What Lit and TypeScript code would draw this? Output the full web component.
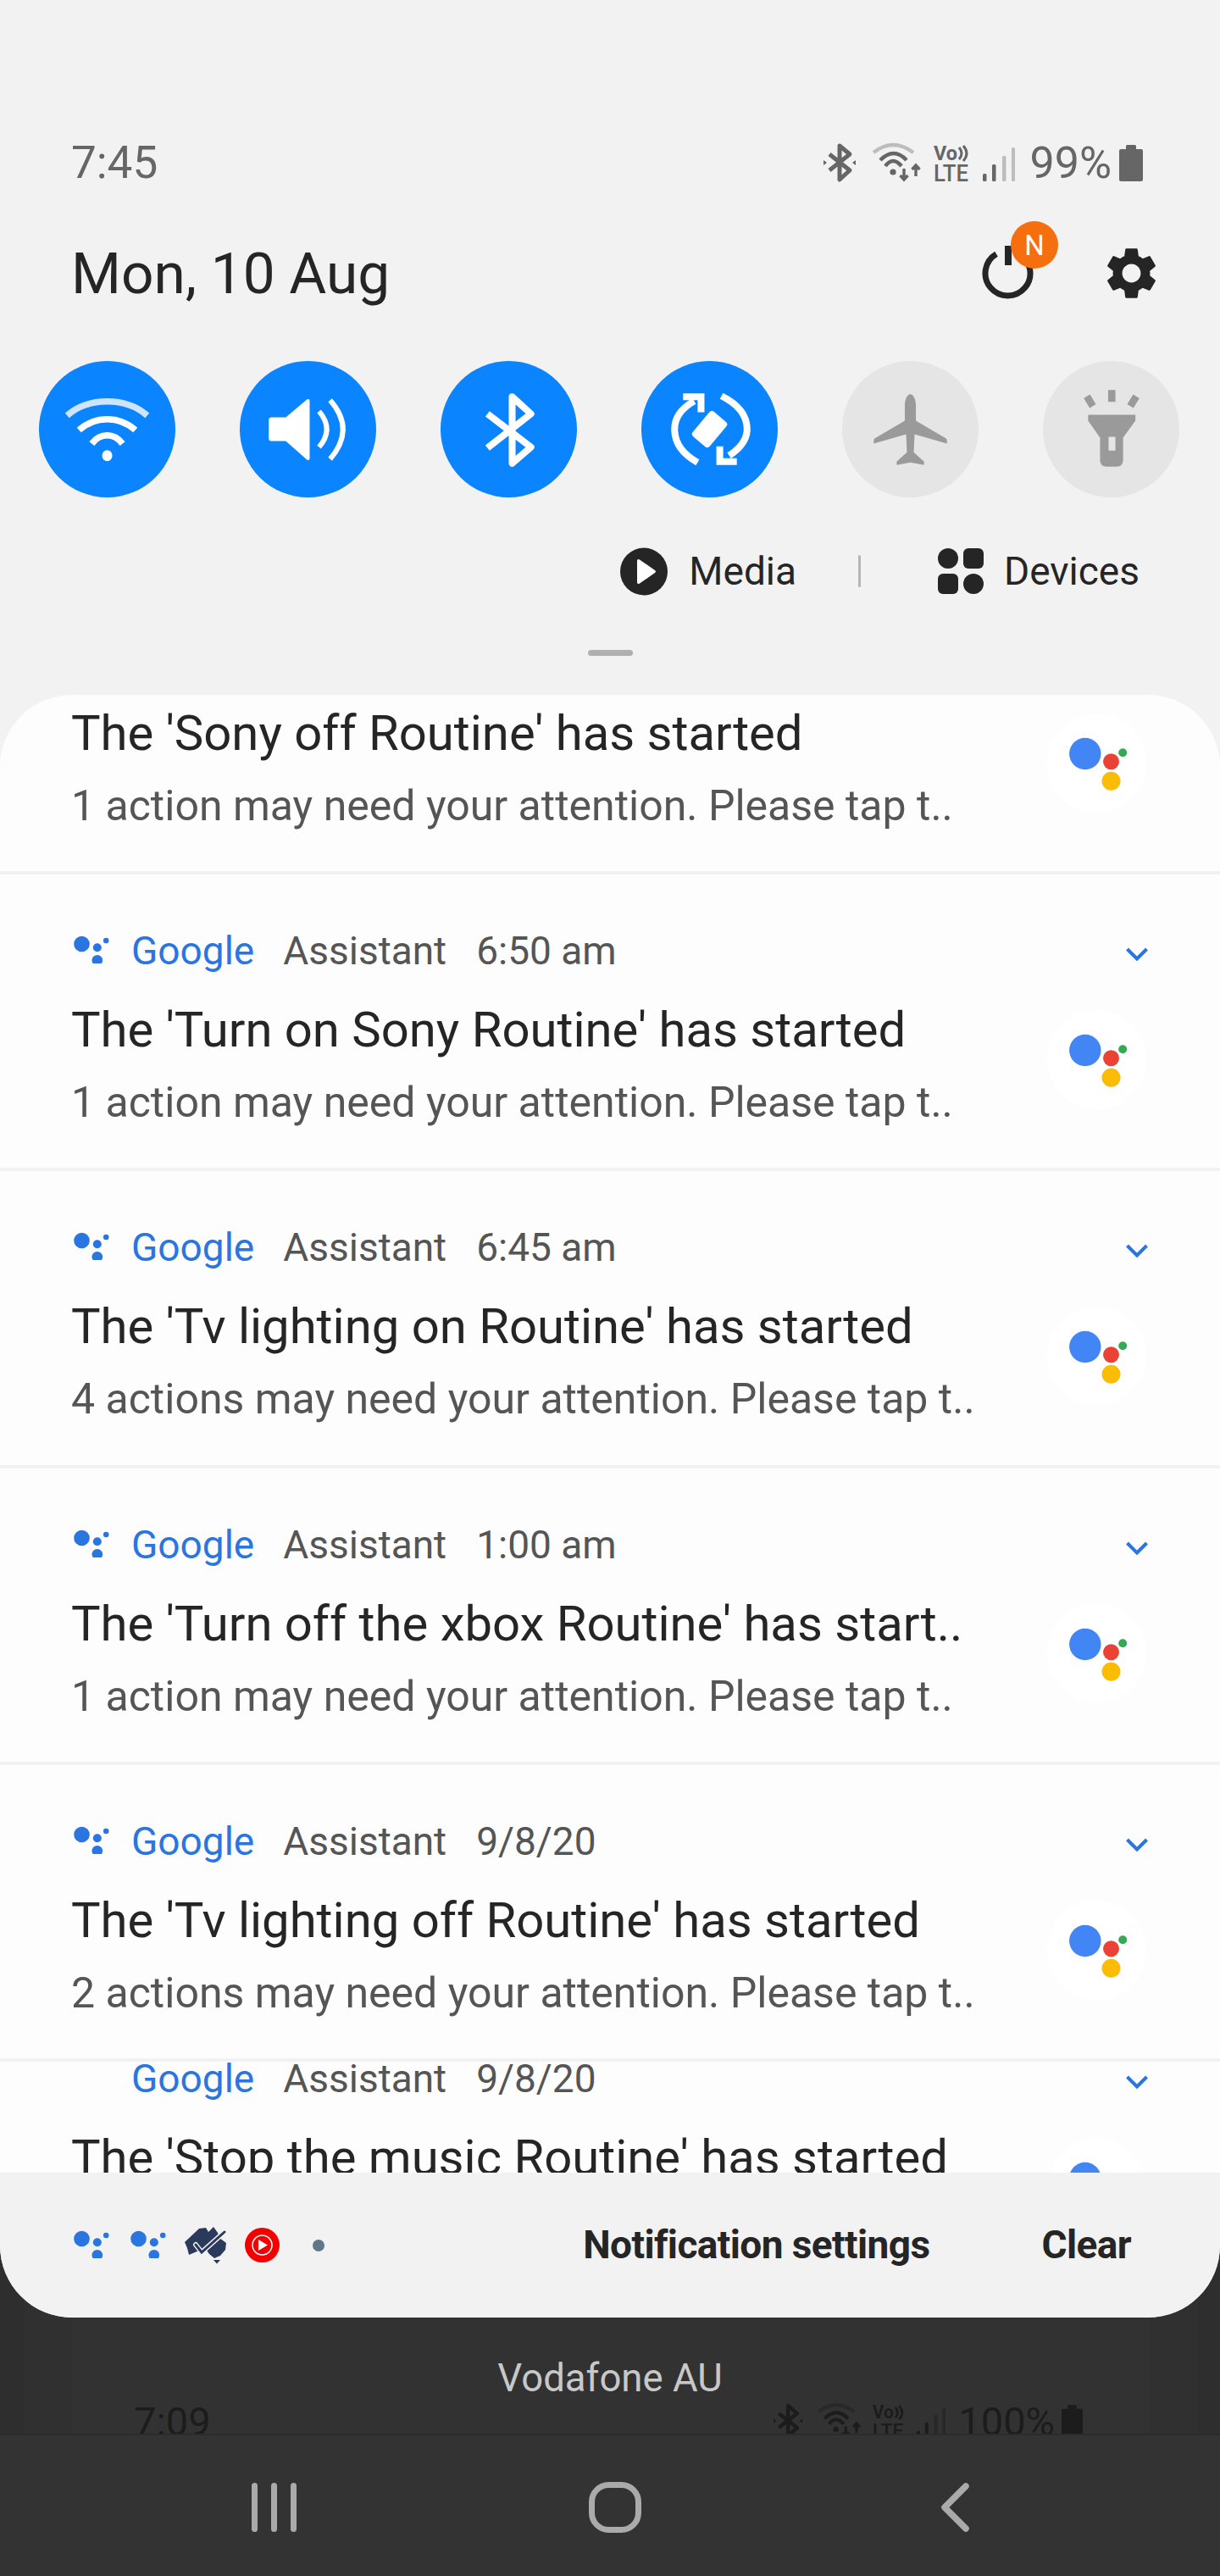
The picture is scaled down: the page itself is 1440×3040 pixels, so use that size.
import { LitElement, html, css, svg, nothing } from "lit";
import { customElement } from "lit/decorators.js";

const dots = () => html`<svg class="dots" width="44" height="36" viewBox="0 0 44 36">
  <circle cx="9.5" cy="13" r="9.3"/><circle cx="27.8" cy="17.3" r="5"/><circle cx="38.2" cy="9" r="3.3"/><circle cx="27.8" cy="32.300" r="6.3"/>
</svg>`;

const statusIcons = (w: number, h: number) => html`<svg class="sicons" width=${w} height=${h} viewBox="0 0 226 44">
  <g fill="none" stroke="currentColor" stroke-width="5" stroke-linejoin="round">
    <path d="M7 12 L31 31 L19 42 V2 L31 12 L7 31"/>
  </g>
  <path d="M0 19 L4 22 L0 25Z M38 19 L34 22 L38 25Z" fill="currentColor"/>
  <g fill="none" stroke-width="4.5">
    <path class="pale" d="M59 10 Q82 -8 106 10"/>
    <path stroke="currentColor" d="M67 19 Q83 3 98 19"/>
    <path stroke="currentColor" d="M73 26 Q82 14 92 26"/>
  </g>
  <circle cx="82" cy="33" r="3.6" fill="currentColor"/>
  <path d="M95 29 V41 M90.5 37 L95 42 L99.5 37 M109 38 V26 M104.5 30 L109 25 L113.5 30" fill="none" stroke="currentColor" stroke-width="3.4"/>
  <text x="130" y="19" class="vo" textLength="28" lengthAdjust="spacingAndGlyphs">Vo</text>
  <path d="M160 4 Q166 11 160 18 M165 2 Q173 11 165 20" fill="none" stroke="currentColor" stroke-width="3"/>
  <text x="130" y="44" class="lte" textLength="41" lengthAdjust="spacingAndGlyphs">LTE</text>
  <rect x="188" y="35" width="4.5" height="9" rx="1.5" fill="currentColor"/>
  <rect x="199" y="24" width="4.5" height="20" rx="1.5" fill="currentColor"/>
  <rect class="palef" x="211" y="14" width="4.5" height="30" rx="1.5"/>
  <rect class="palef" x="222" y="4" width="4" height="40" rx="1.5"/>
</svg>`;

const battery = (w: number, h: number) => html`<svg width=${w} height=${h} viewBox="0 0 28 43">
  <path fill="currentColor" d="M8 1.5 Q8 0 9.5 0 H18.500 Q20 0 20 1.500 V5 H26 Q28 5 28 7 V41 Q28 43 26 43 H2 Q0 43 0 41 V7 Q0 5 2 5 H8Z"/>
</svg>`;

const avatar = () => html`<div class="avatar"><svg width="117" height="117" viewBox="0 0 117 117">
  <circle cx="44.800" cy="47.500" r="18.700" fill="#4285f4"/>
  <circle cx="75.500" cy="56.800" r="9.500" fill="#ea4335"/>
  <circle cx="89.200" cy="46.200" r="5" fill="#34a853"/>
  <circle cx="75.500" cy="79.800" r="11" fill="#fbbc05"/>
</svg></div>`;

const chevron = () => html`<svg class="chev" width="26" height="16" viewBox="0 0 26 16"><path d="M1.500 2 L13 13.500 L24.500 2" fill="none" stroke="#2a75e0" stroke-width="4"/></svg>`;

const toggles = [
  svg`<g fill="none" stroke="#fff" stroke-width="7.500"><path stroke="#cde4fb" d="M33 64 C58 42 102 42 127 64"/><path d="M47 81 C66 64 94 64 113 81"/><path d="M62 97 C72 84 88 84 98 97"/></g><ellipse cx="80" cy="111" rx="6" ry="6.500" fill="#fff"/>`,
  svg`<path fill="#fff" d="M37 66 H54 L79 45 Q82 44 82 47 V114 Q82 117 79 116 L54 94 H37 Q34 94 34 91 V69 Q34 66 37 66Z"/><path fill="none" stroke="#fff" stroke-width="6" d="M93 59 Q111 80 93 101 M106 46 Q136 80 106 115"/>`,
  svg`<path fill="none" stroke="#fff" stroke-width="8" stroke-linejoin="round" d="M55 62 L106 101 L84 120 V42 L106 62 L55 102"/>`,
  svg`<g fill="none" stroke="#fff" stroke-width="8"><path d="M62 47 Q39 60 39 80 Q39 104 66 119"/><path d="M94 41 Q124 56 124 80 Q124 97 103 111"/><path d="M49 42 H70 V60"/><path d="M112 118 H92 V100"/></g><rect x="67" y="61" width="26" height="38" rx="4" transform="rotate(40 80 80)" fill="#fff"/>`,
  svg`<path fill="#9a9a9a" d="M80 39 C76.500 39 73.500 45 73.500 52 V70 L38 91 Q37 92 37 94 V97 L75 86 L76 107 L64 118 V122 L80 119 L96 122 V118 L84 107 L85 86 L123 97 V94 Q123 92 122 91 L86.500 70 V52 C86.500 45 83.500 39 80 39Z"/>`,
  svg`<path fill="#9a9a9a" fill-rule="evenodd" d="M53 63 H108.500 V70 L94 90 V116 Q94 124 86 124 H75 Q67 124 67 116 V90 L53 70Z M77 89 V105 H85 V89Z"/><path d="M80.800 34 V48 M51.500 41.500 L58.500 53 M109.500 41.500 L102.500 53" stroke="#9a9a9a" stroke-width="8.500" fill="none"/>`,
];

type Note = { time: string; title: string; body: string };
const notes: Note[] = [
  { time: "", title: "The 'Sony off Routine' has started", body: "1 action may need your attention. Please tap t.." },
  { time: "6:50 am", title: "The 'Turn on Sony Routine' has started", body: "1 action may need your attention. Please tap t.." },
  { time: "6:45 am", title: "The 'Tv lighting on Routine' has started", body: "4 actions may need your attention. Please tap t.." },
  { time: "1:00 am", title: "The 'Turn off the xbox Routine' has start..", body: "1 action may need your attention. Please tap t.." },
  { time: "9/8/20", title: "The 'Tv lighting off Routine' has started", body: "2 actions may need your attention. Please tap t.." },
];

@customElement("app-root")
export class AppRoot extends LitElement {
  static styles = css`
    :host { display: block; width: 1440px; height: 3040px; overflow: hidden; font-family: Roboto, "Liberation Sans", sans-serif;
      background: linear-gradient(90deg, #2e2e2e 0 28px, #303030 28px 85px, #323232 85px 1357px, #303030 1357px 1413px, #2e2e2e 1413px); }
    .panel { height: 2735px; background: #f2f2f2; border-radius: 0 0 85px 85px; display: flex; flex-direction: column; overflow: hidden; }
    .quick { height: 820px; flex: none; padding-top: 160px; box-sizing: border-box; display: flex; flex-direction: column; }
    .status { height: 64px; display: flex; align-items: center; justify-content: space-between; padding: 0 91px 0 84px; color: #666; font-size: 52px; }
    .clock { font-size: 53px; }
    .sright { display: flex; align-items: center; }
    .sicons { color: inherit; display: block; overflow: visible; }
    .pct { margin: 0 9px 0 17px; }
    .pale { stroke: #bdbdbd; }
    .palef { fill: #bdbdbd; }
    .vo { font-size: 24px; font-weight: 700; fill: currentColor; }
    .lte { font-size: 27px; font-weight: 500; fill: currentColor; }
    .date { margin-top: 58px; height: 80px; display: flex; align-items: center; padding: 0 68px 0 84px; font-size: 67.500px; color: #252525; }
    .date-actions { margin-left: auto; display: flex; align-items: center; gap: 78px; }
    .power { position: relative; width: 62px; height: 64px; }
    .badge { position: absolute; left: 34px; top: -29px; width: 56px; height: 56px; border-radius: 50%; background: #f56f0f; color: #fff; font-size: 33px; display: flex; align-items: center; justify-content: center; }
    .togs { margin-top: 64px; display: flex; gap: 76px; padding-left: 46px; }
    .tog { width: 161px; height: 161px; border-radius: 50%; background: #0a84ff; }
    .tog.off { background: #e5e5e5; }
    .tog svg { display: block; }
    .media { margin-top: 55px; height: 64px; display: flex; align-items: center; justify-content: flex-end; padding-right: 95px; font-size: 46px; color: #252525; }
    .media .t1 { margin-left: 25px; }
    .sep { width: 3px; height: 38px; background: #b5b5b5; margin: 0 91px 0 73px; border-radius: 2px; }
    .media .t2 { margin-left: 24px; }
    .handle { margin: 61px auto 0; width: 53px; height: 7px; border-radius: 4px; background: #b0b0b0; }
    .sheet { flex: 1; min-height: 0; background: #fdfdfd; border-radius: 85px 85px 0 0; overflow: hidden; }
    .scroll { margin-top: -138.25px; }
    .card { height: 350.25px; box-sizing: border-box; border-bottom: 4px solid #f2f2f2; padding: 60px 87px 0 84px; display: grid; grid-template-columns: 1fr 117px; grid-template-rows: 60px 76px 64px; row-gap: 0; }
    .head { grid-column: 1 / 3; display: flex; align-items: center; font-size: 46px; color: #555; }
    .dots { fill: #2a75e0; display: block; flex: none; margin-left: 3px; margin-top: -6px; }
    .google { color: #2a75e0; margin-left: 24px; }
    .assistant { margin-left: 34px; }
    .time { margin-left: 35px; }
    .chev { margin-left: auto; margin-right: -2px; margin-top: 8px; }
    .title { grid-column: 1; grid-row: 2; margin-top: 26px; font-size: 58px; line-height: 74px; color: #252525; white-space: nowrap; }
    .body { grid-column: 1; grid-row: 3; margin-top: 41px; font-size: 50px; line-height: 64px; color: #555; white-space: nowrap; }
    .avatar { grid-column: 2; grid-row: 2 / 4; margin-top: 40px; width: 117px; height: 117px; border-radius: 50%; background: #fff; }
    .avatar svg { display: block; }
    .peek { overflow: hidden; }
    .peek .card { margin-top: -70px; border: none; }
    .peek .dots { visibility: hidden; }
    .footer { height: 171px; flex: none; background: #f2f2f2; display: flex; align-items: center; padding: 0 105px 0 84px; }
    .foot-icons { display: flex; align-items: center; }
    .au { margin-left: 20px; display: block; }
    .yt { margin-left: 22px; display: block; }
    .more { margin-left: 39px; width: 14px; height: 14px; border-radius: 50%; background: #5f7786; }
    .spacer { width: 20px; }
    .foot-text { margin-left: auto; margin-top: -2px; display: flex; gap: 132px; font-size: 46px; font-weight: 700; color: #252525; letter-spacing: -0.6px; }
    .below { height: 137px; box-sizing: border-box; padding-top: 52px; overflow: hidden; }
    .carrier { line-height: 40px; height: 40px; text-align: center; font-size: 45.500px; color: #c8c8c8; }
    .ghost { display: flex; justify-content: space-between; align-items: center; height: 60px; padding: 0 162px 0 158px; color: #1c1c1c; font-size: 47px; }
    .ghost .pct { margin: 0 8px 0 15px; }
    .ghost .pale { stroke: #282828; }
    .ghost .palef { fill: #282828; }
    .nav { height: 168px; background: #333; border-top: 2px solid #2b2b2b; box-sizing: border-box; padding-top: 4px; display: flex; align-items: center; padding-left: 297px; }
    .nav svg { display: block; }
    .home { margin-left: 344px; }
    .back { margin-left: 353px; }
  `;

  private card(n: Note) {
    return html`<div class="card">
      <div class="head">
        ${n.time
          ? html`${dots()}
              <span class="google">Google</span><span class="assistant">Assistant</span><span class="time">${n.time}</span>
              ${chevron()}`
          : nothing}
      </div>
      <div class="title">${n.title}</div>
      <div class="body">${n.body}</div>
      ${avatar()}
    </div>`;
  }

  render() {
    return html`
      <div class="panel">
        <div class="quick">
          <div class="status">
            <span class="clock">7:45</span>
            <div class="sright">${statusIcons(226, 44)}<span class="pct">99%</span>${battery(28, 43)}</div>
          </div>
          <div class="date">
            <span>Mon, 10 Aug</span>
            <div class="date-actions">
              <div class="power">
                <svg width="62" height="64" viewBox="0 0 62 64"><path d="M17 9.700 A26.500 26.500 0 1 0 44 9.700" fill="none" stroke="#252525" stroke-width="7"/><rect x="27" y="0" width="8" height="23" fill="#252525"/></svg>
                <div class="badge">N</div>
              </div>
              <svg width="73" height="73" viewBox="0 0 24 24"><path fill="#252525" d="M19.14 12.94c.04-.3.06-.61.06-.94 0-.32-.02-.64-.07-.94l2.03-1.58a.49.49 0 0 0 .12-.61l-1.92-3.32a.488.488 0 0 0-.59-.22l-2.39.96c-.5-.38-1.03-.7-1.62-.94l-.36-2.54a.484.484 0 0 0-.48-.41h-3.84c-.24 0-.43.17-.47.41l-.36 2.54c-.59.24-1.13.57-1.62.94l-2.39-.96c-.22-.08-.47 0-.59.22L2.74 8.87c-.12.21-.08.47.12.61l2.03 1.58c-.05.3-.09.63-.09.94s.02.64.07.94l-2.03 1.58a.49.49 0 0 0-.12.61l1.92 3.32c.12.22.37.29.59.22l2.39-.96c.5.38 1.03.7 1.62.94l.36 2.54c.05.24.24.41.48.41h3.84c.24 0 .44-.17.47-.41l.36-2.54c.59-.24 1.13-.56 1.62-.94l2.39.96c.22.08.47 0 .59-.22l1.92-3.32c.12-.22.07-.47-.12-.61l-2.01-1.58zM12 15.6c-1.98 0-3.6-1.62-3.6-3.6s1.62-3.6 3.6-3.6 3.6 1.62 3.6 3.6-1.62 3.6-3.6 3.6z"/></svg>
            </div>
          </div>
          <div class="togs">
            ${toggles.map((t, i) => html`<div class="tog ${i > 3 ? "off" : ""}"><svg width="161" height="161" viewBox="0 0 160 160">${t}</svg></div>`)}
          </div>
          <div class="media">
            <svg width="56" height="57" viewBox="0 0 56 57"><circle cx="28" cy="28.500" r="28" fill="#252525"/><path d="M20 16 Q20 13 23 14.500 L41 27 Q43 28.500 41 30 L23 42.500 Q20 44 20 41Z" fill="#fff"/></svg>
            <span class="t1">Media</span>
            <div class="sep"></div>
            <svg width="54" height="54" viewBox="0 0 54 54" fill="#252525"><circle cx="12" cy="12" r="12"/><rect x="30" y="0" width="24" height="24" rx="6"/><rect x="0" y="30" width="24" height="24" rx="6"/><circle cx="42" cy="42" r="12"/></svg>
            <span class="t2">Devices</span>
          </div>
          <div class="handle"></div>
        </div>
        <div class="sheet">
          <div class="scroll">
            ${notes.map((n) => this.card(n))}
            <div class="peek">${this.card({ time: "9/8/20", title: "The 'Stop the music Routine' has started", body: "" })}</div>
          </div>
        </div>
        <div class="footer">
          <div class="foot-icons">
            ${dots()}<span class="spacer"></span>${dots()}
            <svg class="au" width="49" height="44" viewBox="0 0 49 44">
              <path fill="#2b3a5c" d="M0 18 L17 2 L25 1 L28 6 L34 0 L39 7 L41 13 L49 19 L48 27 L42 34 L35 37 L29 32 L24 25 L5 33 L3 25Z"/>
              <path fill="#2b3a5c" d="M34 39 H42 L38 43.500Z"/>
              <path d="M13 21 L20 30 L47 6" fill="none" stroke="#f2f2f2" stroke-width="6" stroke-linecap="round"/>
              <path d="M13 21 L20 30 L47 6" fill="none" stroke="#2b3a5c" stroke-width="3" stroke-linecap="round"/>
            </svg>
            <svg class="yt" width="41" height="41" viewBox="0 0 41 41"><circle cx="20.500" cy="20.500" r="20.500" fill="#f40000"/><circle cx="20.500" cy="20.500" r="11.500" fill="none" stroke="#fff" stroke-width="1.500"/><path d="M16 14 L27 20.500 L16 27Z" fill="#fff"/></svg>
            <div class="more"></div>
          </div>
          <div class="foot-text"><span>Notification settings</span><span>Clear</span></div>
        </div>
      </div>
      <div class="below">
        <div class="carrier">Vodafone AU</div>
        <div class="ghost">
          <span>7:09</span>
          <div class="sright">${statusIcons(203, 40)}<span class="pct">100%</span>${battery(25, 39)}</div>
        </div>
      </div>
      <div class="nav">
        <svg width="54" height="58" viewBox="0 0 54 58" fill="#aaa"><rect x="0" y="0" width="7" height="58" rx="3.500"/><rect x="23" y="0" width="7" height="58" rx="3.500"/><rect x="46" y="0" width="7" height="58" rx="3.500"/></svg>
        <svg class="home" width="62" height="60" viewBox="0 0 62 60"><rect x="3.500" y="3.500" width="55" height="53" rx="20" fill="none" stroke="#aaa" stroke-width="7"/></svg>
        <svg class="back" width="34" height="58" viewBox="0 0 34 58"><path d="M30 4 L5 29 L30 54" fill="none" stroke="#aaa" stroke-width="7.500" stroke-linecap="round" stroke-linejoin="round"/></svg>
      </div>
    `;
  }
}
